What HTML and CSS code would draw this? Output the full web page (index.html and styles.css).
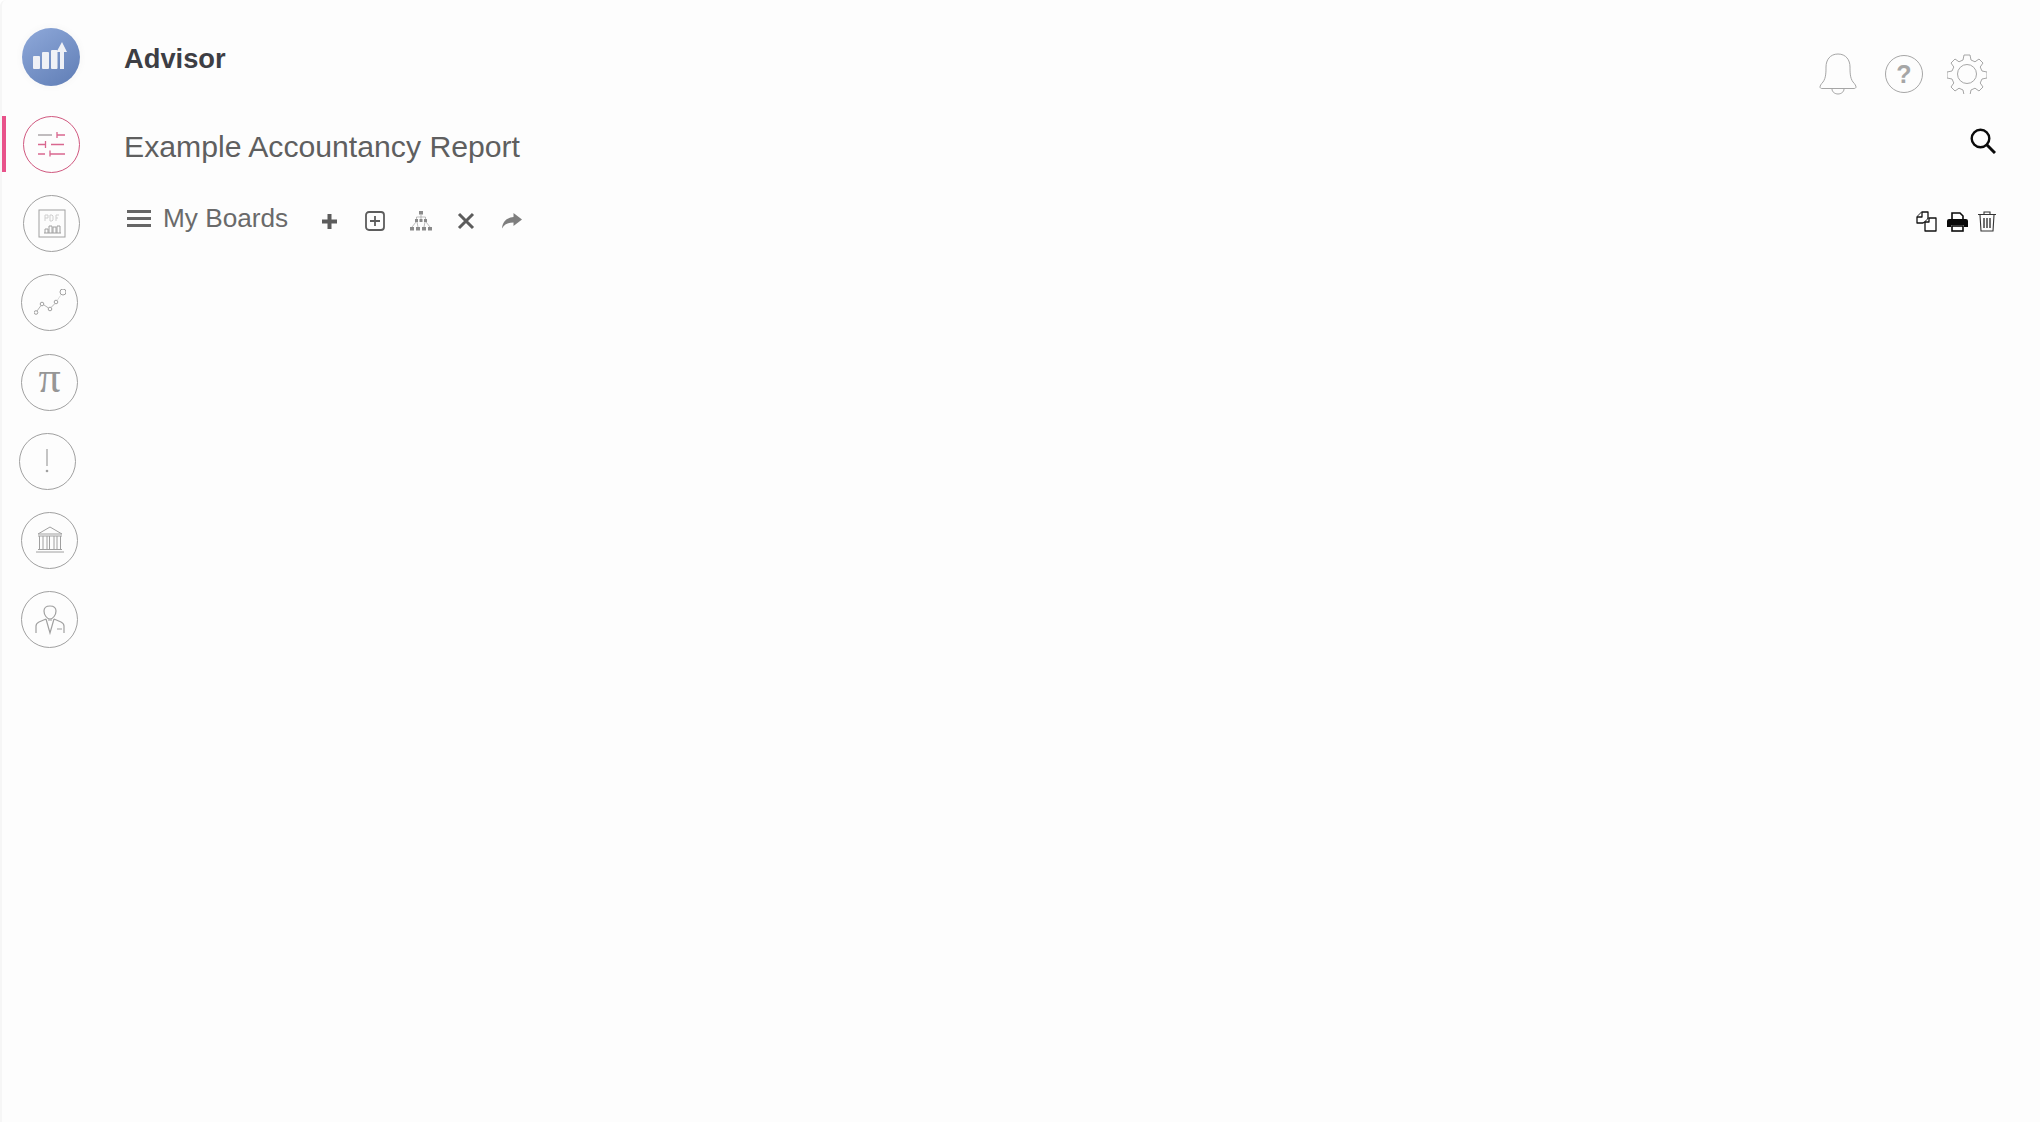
FILE: index.html
```html
<!DOCTYPE html>
<html lang="en">
<head>
    <meta charset="UTF-8">
    <title>Advisor</title>
    <link rel="stylesheet" href="styles.css">
</head>
<body>
    <div class="app">
        <nav class="sidebar">
            <div class="logo">
                <svg width="34" height="27" viewBox="0 0 34 27" fill="#eff1f6">
                    <rect x="0" y="14" width="7" height="13" rx="1"/>
                    <rect x="9" y="10" width="7" height="17" rx="1"/>
                    <rect x="18" y="8" width="6.500" height="19" rx="1"/>
                    <path d="M27 27V10h-3.500L29 0l5 10h-3v17z"/>
                </svg>
            </div>

            <div class="nav-item active">
                <svg width="28" height="25" viewBox="0 0 28 25" fill="none" stroke="#d9678f" stroke-width="1.300">
                    <path d="M0 3h14" stroke="#a09a9c"/>
                    <path d="M19 3h8M19 0v6"/>
                    <path d="M0 12.500h8M13 12.500h13M7.500 9v7" />
                    <path d="M0 22h7M12 22h15M12 18.500v6" />
                </svg>
            </div>
            <div class="nav-item">
                <svg width="28" height="30" viewBox="0 0 28 30" fill="none" stroke="#a0a0a0" stroke-width="1">
                    <rect x="1" y="1" width="26" height="27"/>
                    <path d="M7 6v6M7 6h3v3H7M12 6v6h2l1-1V7l-1-1zM18 6v6M18 6h3M18 9h2" stroke="#cfcfcf"/>
                    <path d="M7 24v-4h3v4M11 24v-7h3v7M15 24v-6h3v6M19 24v-7h3v7M6 24h17"/>
                </svg>
            </div>
            <div class="nav-item shift-left">
                <svg width="32" height="28" viewBox="0 0 32 28" fill="none" stroke="#a0a0a0" stroke-width="1">
                    <circle cx="2" cy="23.500" r="1.800"/>
                    <circle cx="8" cy="15" r="1.800"/>
                    <circle cx="16" cy="20" r="1.800"/>
                    <circle cx="22" cy="13" r="1.800"/>
                    <circle cx="29" cy="3" r="3"/>
                    <path d="M3 22 7 16.500M10 16l4.500 3M17 18.500l4-4" stroke="#b4b4b4"/>
                    <path d="M23.500 11l3-4.500" stroke="#dcdcdc"/>
                </svg>
            </div>
            <div class="nav-item shift-left">
                <span class="pi">π</span>
            </div>
            <div class="nav-item shift-far">
                <svg width="6" height="24" viewBox="0 0 6 24">
                    <rect x="1.400" y="0" width="1.200" height="17" fill="#a0a0a0"/>
                    <circle cx="2" cy="22" r="1.300" fill="#a0a0a0"/>
                </svg>
            </div>
            <div class="nav-item shift-left">
                <svg width="28" height="28" viewBox="0 0 28 28" fill="none" stroke="#a0a0a0" stroke-width="1">
                    <path d="M14 1 2 8h24zM2 10h24M3.500 10v13M7 10v13M11 10v13M13.500 10v13M18 10v13M21 10v13M24.500 10v13M2 23.500h24M0 26h28"/>
                </svg>
            </div>
            <div class="nav-item shift-left">
                <svg width="30" height="30" viewBox="0 0 30 30" fill="none" stroke="#a0a0a0" stroke-width="1.200">
                    <path d="M15 1c-4 0-6 2-6 5 0 4 3 8 6 8s6-4 6-8c0-3-2-5-6-5z"/>
                    <path d="M1 28v-7c0-2 1-3 3-4l7-3M29 28v-7c0-2-1-3-3-4l-7-3M11 14l4 14 4-14M13 15h4M22 24h5"/>
                </svg>
            </div>
        </nav>

        <main class="content">
            <header class="top-row">
                <h1 class="app-name">Advisor</h1>
                <div class="top-icons">
                    <svg class="bell" width="38" height="42" viewBox="0 0 38 42" fill="none" stroke="#a6a6a6" stroke-width="1">
                        <path d="M19 1c-8 0-12 6-12 13 0 5 0 11-3 15-2 2-3 4-3 5 0 1 1 1.500 2 1.500h32c1 0 2-.500 2-1.500 0-1-1-3-3-5-3-4-3-10-3-15 0-7-4-13-12-13z"/>
                        <path d="M13 36c0 3 3 5 6 5s6-2 6-5"/>
                    </svg>
                    <div class="help-icon">?</div>
                    <svg width="40" height="40" viewBox="0 0 40 40" fill="none" stroke="#a6a6a6" stroke-width="1">
                        <circle cx="20" cy="20" r="9.500"/>
                        <path d="M17 1h6l1 5 4 1.800 4-2.800 4 4-2.800 4 1.800 4 5 1v6l-5 1-1.800 4 2.800 4-4 4-4-2.800-4 1.800-1 5h-6l-1-5-4-1.800-4 2.800-4-4 2.800-4-1.800-4-5-1v-6l5-1 1.800-4-2.800-4 4-4 4 2.800 4-1.800z" stroke-linejoin="round"/>
                    </svg>
                </div>
            </header>

            <div class="title-row">
                <h2 class="report-title">Example Accountancy Report</h2>
                <svg class="search-icon" width="26" height="26" viewBox="0 0 26 26" fill="none" stroke="#0a0a0a">
                    <circle cx="10.500" cy="10.500" r="8.800" stroke-width="2.400"/>
                    <path d="M17 17l8 8" stroke-width="3"/>
                </svg>
            </div>

            <div class="toolbar">
                <div class="boards">
                    <span class="burger"><i></i><i></i><i></i></span>
                    <span class="boards-label">My Boards</span>
                </div>
                <div class="tools">
                    <span class="tool"><svg width="15" height="15" viewBox="0 0 15 15"><path d="M5.500 0h4v5.500H15v4H9.500V15h-4V9.500H0v-4h5.500z" fill="#5c5c5c"/></svg></span>
                    <span class="tool"><svg width="20" height="20" viewBox="0 0 20 20" fill="none" stroke="#5c5c5c">
                        <rect x="1" y="1" width="18" height="18" rx="3" stroke-width="1.800"/>
                        <path d="M10 5v10M5 10h10" stroke-width="1.800"/>
                    </svg></span>
                    <span class="tool"><svg width="22" height="20" viewBox="0 0 22 20" fill="#8a8a8a">
                        <rect x="9" y="0" width="4" height="3.500"/>
                        <rect x="5" y="8" width="3" height="3"/>
                        <rect x="14" y="8" width="3" height="3"/>
                        <rect x="9.500" y="8" width="3" height="3"/>
                        <rect x="0" y="16" width="4" height="3.500"/>
                        <rect x="6" y="16" width="4" height="3.500"/>
                        <rect x="12" y="16" width="4" height="3.500"/>
                        <rect x="18" y="16" width="4" height="3.500"/>
                        <path d="M11 3.500V8M6.500 8l0-2h9v2M6 11 2 16M16 11l4 5M7 11l1 5M15 11l-1 5" stroke="#a0a0a0" stroke-width=".7" fill="none"/>
                    </svg></span>
                    <span class="tool"><svg width="18" height="18" viewBox="0 0 18 18" fill="none" stroke="#5c5c5c" stroke-width="3">
                        <path d="M2 2l14 14M16 2 2 16"/>
                    </svg></span>
                    <span class="tool"><svg width="20" height="16" viewBox="0 0 20 16"><path d="M11.500 0 20 6.500 11.500 13V9.500C6 9.500 2.500 11 0 15.500c.500-6.500 4-10.500 11.500-11.500z" fill="#7e7e7e"/></svg></span>
                </div>
                <div class="actions">
                    <svg width="21" height="21" viewBox="0 0 21 21" fill="#fff" stroke="#111" stroke-width="1.300" stroke-linejoin="round">
                        <path d="M6 1h6v8l-5 3H1V6z"/>
                        <path d="M6 1v5H1"/>
                        <path d="M13 7h7v13H9v-9z"/>
                        <path d="M13 7v4H9"/>
                    </svg>
                    <svg width="21" height="20" viewBox="0 0 21 20">
                        <path d="M5 1h8l3 3v4H5z" fill="#fff" stroke="#0a0a0a" stroke-width="1.600"/>
                        <path d="M2 7h17a2 2 0 0 1 2 2v6h-4v-2H4v2H0V9a2 2 0 0 1 2-2z" fill="#0a0a0a"/>
                        <rect x="5" y="14" width="11" height="5" fill="#fff" stroke="#0a0a0a" stroke-width="1.600"/>
                    </svg>
                    <svg width="18" height="21" viewBox="0 0 18 21" fill="none" stroke="#333" stroke-width="1.100">
                        <path d="M0 3.500h18M6 3V1h6v2M2 4l1 16h12l1-16"/>
                        <path d="M6 7v10M9 7v10M12 7v10" stroke-width="1.400"/>
                    </svg>
                </div>
            </div>
        </main>
    </div>
</body>
</html>
```

FILE: styles.css
```css
* {
    box-sizing: border-box;
}

html, body {
    height: 100%;
}

body {
    margin: 0;
    background-color: #ffffff;
    font-family: "Liberation Sans", Arial, sans-serif;
}

.app {
    display: flex;
    min-height: 100%;
    background-color: #fdfdfd;
    border-left: 2px solid #f6f6f6;
    border-top-left-radius: 6px;
}

/* left column with the round icons */
.sidebar {
    width: 122px;
    padding-top: 28px;
    display: flex;
    flex-direction: column;
    flex-shrink: 0;
}

.logo {
    width: 58px;
    height: 58px;
    margin-left: 20px;
    margin-bottom: 30px;
    border-radius: 50%;
    background: linear-gradient(145deg, #8fa9da, #5f7db5);
    box-shadow: 0 0 8px #f5f5f5;
    display: flex;
    justify-content: center;
    align-items: center;
}

.logo svg {
    margin-top: -4px;
    margin-left: -2px;
}

.nav-item {
    width: 57px;
    height: 57px;
    margin-left: 21px;
    margin-bottom: 22.2px;
    border: 1px solid #a0a0a0;
    border-radius: 50%;
    display: flex;
    justify-content: center;
    align-items: center;
    position: relative;
}

.nav-item.active {
    border-color: #d0587f;
}

/* pink marker beside the selected item */
.nav-item.active::before {
    content: "";
    position: absolute;
    left: -22px;
    top: -1px;
    width: 4px;
    height: 56px;
    background-color: #e8528a;
}

.shift-left {
    margin-left: 19px;
}

.shift-far {
    margin-left: 17px;
}

.pi {
    font-family: "Liberation Serif", serif;
    font-size: 44px;
    line-height: 1;
    color: #969696;
    margin-top: -8px;
}

.content {
    flex: 1;
    padding-right: 44px;
}

.top-row {
    height: 111px;
    display: flex;
    justify-content: space-between;
}

.app-name {
    margin: 41px 0 0;
    font-size: 27.3px;
    line-height: 36px;
    font-weight: bold;
    color: #3d3e44;
}

.top-icons {
    display: flex;
    align-items: center;
    gap: 24px;
    height: 96px;
    margin-top: 26px;
    margin-right: 9px;
}

.bell {
    margin-right: 4px;
}

.help-icon {
    width: 38px;
    height: 38px;
    border: 1px solid #a6a6a6;
    border-radius: 50%;
    color: #a6a6a6;
    font-size: 25px;
    font-weight: bold;
    line-height: 36px;
    text-align: center;
}

.title-row {
    height: 88px;
    display: flex;
    justify-content: space-between;
}

.report-title {
    margin: 18px 0 0;
    font-size: 30.2px;
    line-height: 36px;
    font-weight: normal;
    color: #5f5f5f;
}

.search-icon {
    margin-top: 17px;
}

.toolbar {
    display: flex;
    align-items: center;
    height: 44px;
}

.boards {
    display: flex;
    align-items: center;
    gap: 12px;
    margin-left: 3px;
    margin-top: -6px;
}

.burger {
    width: 24px;
    display: flex;
    flex-direction: column;
    gap: 4px;
}

.burger i {
    display: block;
    height: 3px;
    background-color: #666;
}

.boards-label {
    font-size: 26.2px;
    line-height: 34px;
    color: #6a6a6a;
}

.tools {
    display: flex;
    align-items: center;
    margin-left: 19px;
}

.tool {
    width: 45.5px;
    display: flex;
    justify-content: center;
    align-items: center;
}

.actions {
    margin-left: auto;
    margin-top: 1px;
    display: flex;
    align-items: center;
    gap: 10px;
}
```
